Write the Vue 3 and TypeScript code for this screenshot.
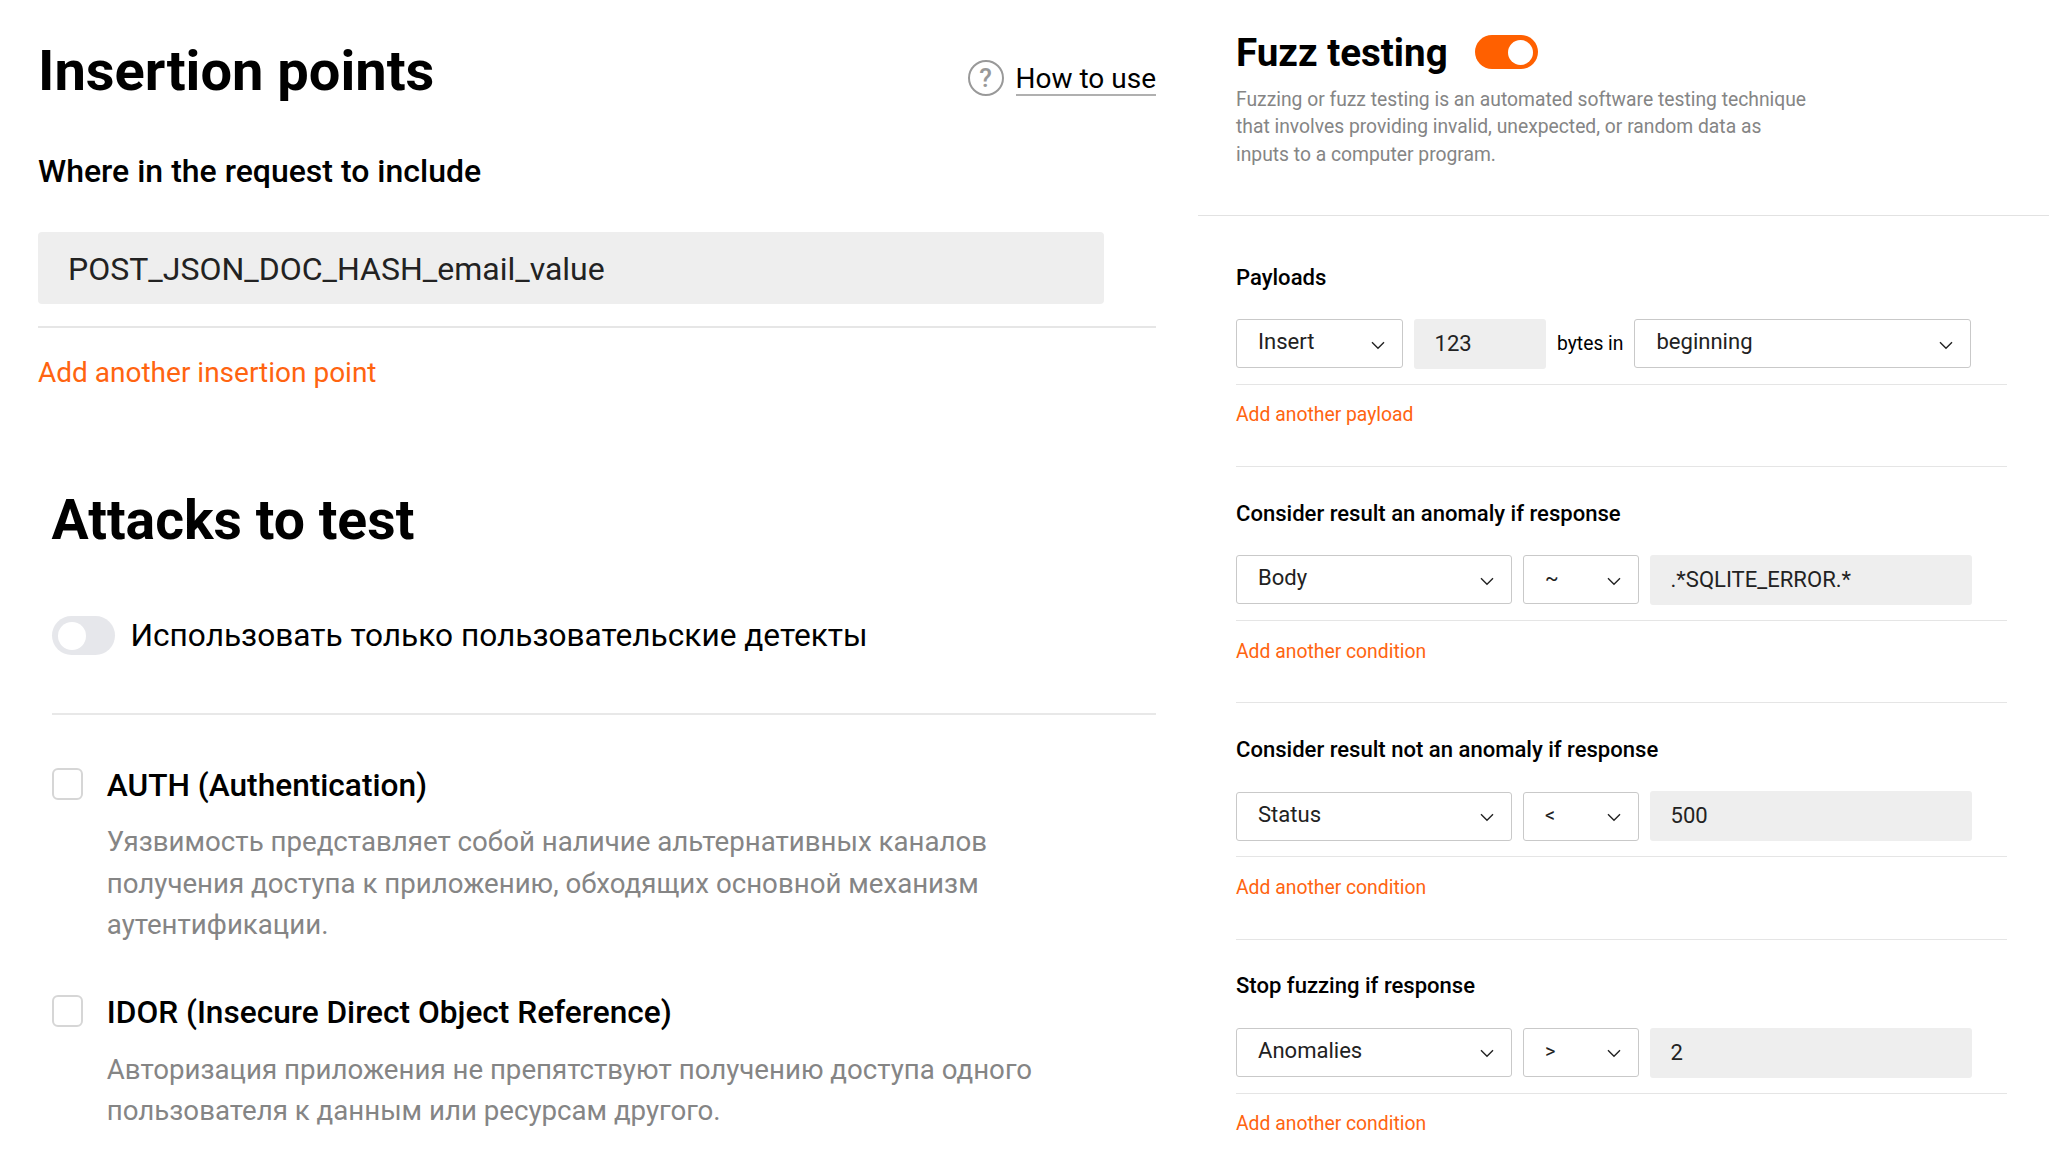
<script setup lang="ts">
interface Attack {
  title: string
  lines: string[]
}

interface Condition {
  title: string
  field: string
  operator: string
  value: string
}

const attacks: Attack[] = [
  {
    title: 'AUTH (Authentication)',
    lines: [
      'Уязвимость представляет собой наличие альтернативных каналов',
      'получения доступа к приложению, обходящих основной механизм',
      'аутентификации.',
    ],
  },
  {
    title: 'IDOR (Insecure Direct Object Reference)',
    lines: [
      'Авторизация приложения не препятствуют получению доступа одного',
      'пользователя к данным или ресурсам другого.',
    ],
  },
]

const conditions: Condition[] = [
  { title: 'Consider result an anomaly if response', field: 'Body', operator: '~', value: '.*SQLITE_ERROR.*' },
  { title: 'Consider result not an anomaly if response', field: 'Status', operator: '<', value: '500' },
  { title: 'Stop fuzzing if response', field: 'Anomalies', operator: '>', value: '2' },
]
</script>

<template>
  <main class="page">
    <div class="left">
      <section class="insertion">
        <header class="head">
          <h1>Insertion points</h1>
          <a class="help"><span class="help-icon">?</span><span class="help-text">How to use</span></a>
        </header>
        <h2>Where in the request to include</h2>
        <div class="point">POST_JSON_DOC_HASH_email_value</div>
        <a class="add-point">Add another insertion point</a>
      </section>

      <section class="attacks">
        <h1 class="attacks-title">Attacks to test</h1>
        <div class="only-custom">
          <span class="toggle off"><i /></span>
          <span class="only-text">Использовать только пользовательские детекты</span>
        </div>
        <article v-for="a in attacks" :key="a.title" class="attack">
          <span class="checkbox" />
          <div>
            <h3>{{ a.title }}</h3>
            <p><span v-for="l in a.lines" :key="l">{{ l }}</span></p>
          </div>
        </article>
      </section>
    </div>

    <div class="right">
      <header class="fuzz-head">
        <div class="fuzz-title">
          <h1>Fuzz testing</h1>
          <span class="toggle on"><i /></span>
        </div>
        <p>
          <span>Fuzzing or fuzz testing is an automated software testing technique</span>
          <span>that involves providing invalid, unexpected, or random data as</span>
          <span>inputs to a computer program.</span>
        </p>
      </header>

      <div class="groups">
        <section class="group">
          <h4>Payloads</h4>
          <div class="controls">
            <div class="select w-insert">
              <span>Insert</span>
              <svg viewBox="0 0 14 9"><path d="M1 1.2l6 6 6-6" /></svg>
            </div>
            <div class="input w-bytes">123</div>
            <span class="unit">bytes in</span>
            <div class="select w-place">
              <span class="begin">beginning</span>
              <svg viewBox="0 0 14 9"><path d="M1 1.2l6 6 6-6" /></svg>
            </div>
          </div>
          <a class="add">Add another payload</a>
        </section>

        <section v-for="c in conditions" :key="c.title" class="group">
          <h4>{{ c.title }}</h4>
          <div class="controls">
            <div class="select w-field">
              <span>{{ c.field }}</span>
              <svg viewBox="0 0 14 9"><path d="M1 1.2l6 6 6-6" /></svg>
            </div>
            <div class="select w-op">
              <span class="op">{{ c.operator }}</span>
              <svg viewBox="0 0 14 9"><path d="M1 1.2l6 6 6-6" /></svg>
            </div>
            <div class="input w-value">{{ c.value }}</div>
          </div>
          <a class="add">Add another condition</a>
        </section>
      </div>
    </div>
  </main>
</template>

<style>
body {
  background: #fff;
}
</style>

<style scoped>
* {
  box-sizing: border-box;
}
.page {
  display: flex;
  width: 2049px;
  height: 1155px;
  overflow: hidden;
  font-family: Roboto, sans-serif;
  color: #000;
  white-space: nowrap;
}
h1,
h2,
h3,
h4,
p {
  margin: 0;
}
p span {
  display: block;
}
.left {
  width: 1198px;
  padding: 38px 42px 0 38px;
}
.head {
  display: flex;
  justify-content: space-between;
  height: 66px;
}
h1 {
  font-size: 56px;
  line-height: 66px;
  font-weight: 700;
}
.help {
  display: flex;
  gap: 12px;
  margin-top: 22px;
}
.help-icon {
  width: 36px;
  height: 36px;
  border: 2px solid #999;
  border-radius: 50%;
  color: #999;
  font-size: 26px;
  font-weight: 500;
  line-height: 32px;
  text-align: center;
}
.help-text {
  height: 36px;
  border-bottom: 2px solid #b0b0b0;
  font-size: 28px;
  line-height: 38px;
}
h2 {
  margin-top: 48px;
  font-size: 32px;
  line-height: 38px;
  font-weight: 500;
}
.insertion {
  height: 449px;
}
.point {
  width: 1066px;
  height: 72px;
  margin-top: 42px;
  padding: 1px 0 0 30px;
  border-radius: 4px;
  background: #eee;
  color: #222;
  font-size: 32px;
  line-height: 72px;
}
.add-point {
  display: block;
  margin-top: 22px;
  padding-top: 28px;
  border-top: 2px solid #e6e6e6;
  color: #ff6410;
  font-size: 28px;
  line-height: 34px;
}
.attacks {
  margin-left: 13.5px;
}
.attacks-title {
  font-size: 55.3px;
  line-height: 68px;
}
.only-custom {
  display: flex;
  align-items: center;
  gap: 16px;
  height: 160px;
  margin-bottom: 51px;
  padding: 3px 0 0;
  border-bottom: 2px solid #e8e8e8;
  font-size: 31.63px;
}
.toggle {
  display: flex;
  align-items: center;
  width: 63px;
}
.toggle i {
  border-radius: 50%;
  background: #fff;
}
.toggle.off {
  height: 39px;
  padding-left: 6px;
  border-radius: 20px;
  background: #e6e7eb;
}
.toggle.off i {
  width: 28px;
  height: 28px;
}
.toggle.on {
  justify-content: flex-end;
  height: 34px;
  padding-right: 4.5px;
  border-radius: 17px;
  background: #ff6000;
}
.toggle.on i {
  width: 25px;
  height: 25px;
}
.attack {
  display: flex;
  gap: 24.3px;
  height: 227.3px;
}
.checkbox {
  width: 31px;
  height: 32px;
  margin-top: 2px;
  border: 2px solid #d6d6d6;
  border-radius: 6px;
}
h3 {
  padding-top: 1px;
  font-size: 31.63px;
  line-height: 38px;
  font-weight: 500;
}
.attack p {
  margin-top: 16.3px;
  color: #858585;
  font-size: 27.67px;
  line-height: 41.5px;
}
.right {
  width: 851px;
}
.fuzz-head {
  height: 216px;
  padding: 29px 0 0 38px;
  border-bottom: 1px solid #e2e2e2;
}
.fuzz-title {
  display: flex;
  gap: 27px;
  height: 46px;
}
.fuzz-title h1 {
  font-size: 38.55px;
  line-height: 48px;
}
.fuzz-title .toggle {
  margin-top: 6px;
}
.fuzz-head p {
  margin-top: 10.6px;
  color: #858585;
  font-size: 19.3px;
  line-height: 27.7px;
}
.groups {
  padding: 14.8px 42px 0 38px;
}
.group {
  height: 236.3px;
  padding-top: 33.72px;
  border-bottom: 1px solid #e5e5e5;
}
h4 {
  font-size: 22.07px;
  line-height: 26px;
  font-weight: 500;
}
.controls {
  display: flex;
  align-items: flex-start;
  gap: 11px;
  height: 50px;
  margin-top: 28.18px;
  color: #222;
  font-size: 22.05px;
}
.select {
  display: flex;
  justify-content: space-between;
  height: 49px;
  margin-top: 0.3px;
  padding: 0 17px 0 21px;
  border: 1px solid #c9c9c9;
  border-radius: 3px;
  line-height: 44.4px;
}
.select svg {
  width: 14px;
  height: 9px;
  margin-top: 20.6px;
  fill: none;
  stroke: #222;
  stroke-width: 1.4;
}
.input {
  height: 50px;
  padding-left: 20.5px;
  border-radius: 3px;
  background: #eee;
  line-height: 50px;
}
.unit {
  color: #000;
  font-size: 19.3px;
  line-height: 49px;
}
.w-insert {
  width: 167px;
}
.w-bytes {
  width: 132px;
}
.w-place {
  width: 337px;
}
.w-field {
  width: 276px;
}
.w-op {
  width: 116px;
}
.w-value {
  width: 322px;
}
.op {
  font-size: 20px;
}
.add {
  display: block;
  margin-top: 15px;
  padding-top: 18.6px;
  border-top: 1px solid #e5e5e5;
  color: #ff6410;
  font-size: 19.33px;
  line-height: 24px;
}
</style>
